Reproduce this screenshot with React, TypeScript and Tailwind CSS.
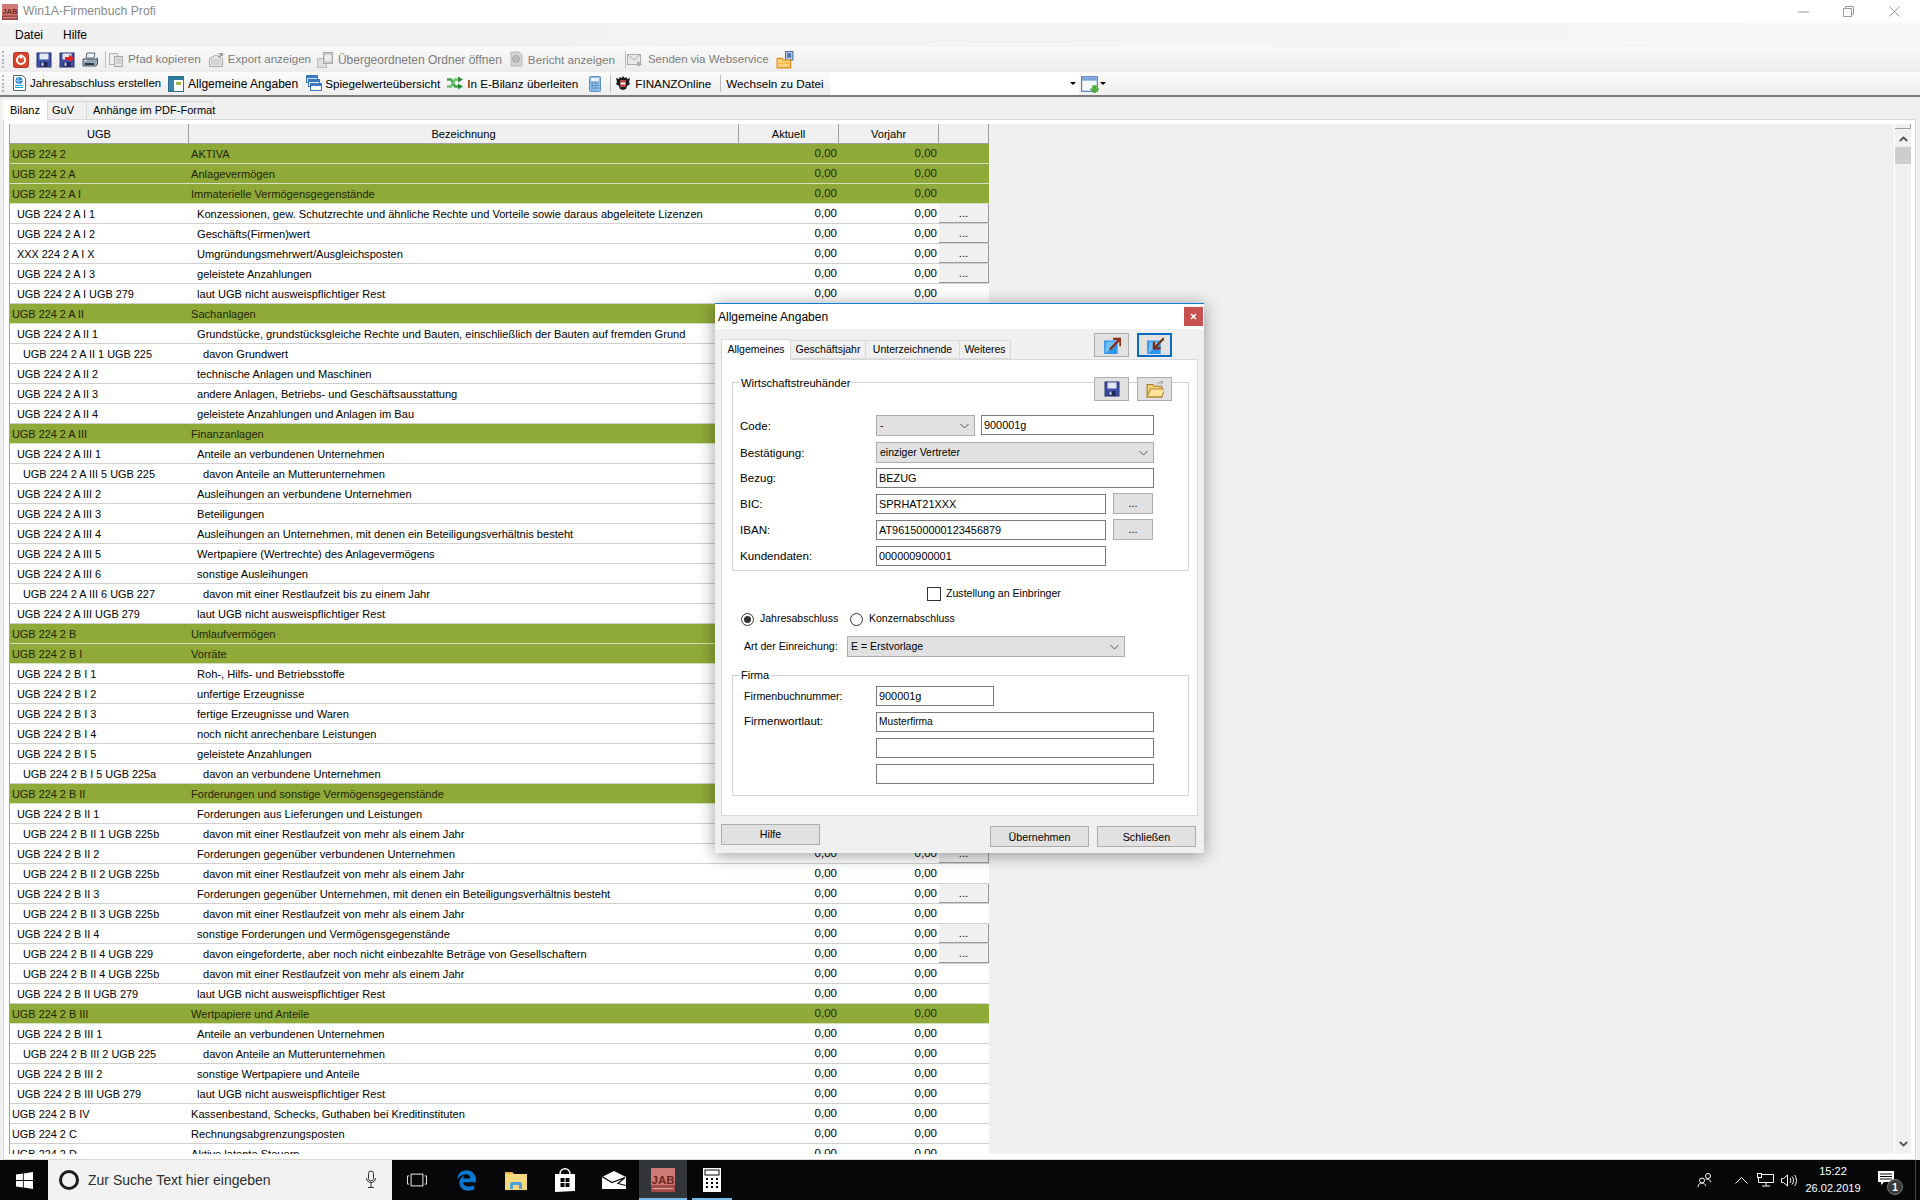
import React from "react";
import { FaEdgeLegacy } from "react-icons/fa6";

type R = [string, string, number, number?]; // ugb, bez, level (-1 = green), button
const rows: R[] = [
  ["UGB 224 2", "AKTIVA", -1],
  ["UGB 224 2 A", "Anlagevermögen", -1],
  ["UGB 224 2 A I", "Immaterielle Vermögensgegenstände", -1],
  ["UGB 224 2 A I 1", "Konzessionen, gew. Schutzrechte und ähnliche Rechte und Vorteile sowie daraus abgeleitete Lizenzen", 1, 1],
  ["UGB 224 2 A I 2", "Geschäfts(Firmen)wert", 1, 1],
  ["XXX 224 2 A I X", "Umgründungsmehrwert/Ausgleichsposten", 1, 1],
  ["UGB 224 2 A I 3", "geleistete Anzahlungen", 1, 1],
  ["UGB 224 2 A I UGB 279", "laut UGB nicht ausweispflichtiger Rest", 1],
  ["UGB 224 2 A II", "Sachanlagen", -1],
  ["UGB 224 2 A II 1", "Grundstücke, grundstücksgleiche Rechte und Bauten, einschließlich der Bauten auf fremden Grund", 1],
  ["UGB 224 2 A II 1 UGB 225", "davon Grundwert", 2],
  ["UGB 224 2 A II 2", "technische Anlagen und Maschinen", 1],
  ["UGB 224 2 A II 3", "andere Anlagen, Betriebs- und Geschäftsausstattung", 1],
  ["UGB 224 2 A II 4", "geleistete Anzahlungen und Anlagen im Bau", 1],
  ["UGB 224 2 A III", "Finanzanlagen", -1],
  ["UGB 224 2 A III 1", "Anteile an verbundenen Unternehmen", 1],
  ["UGB 224 2 A III 5 UGB 225", "davon Anteile an Mutterunternehmen", 2],
  ["UGB 224 2 A III 2", "Ausleihungen an verbundene Unternehmen", 1],
  ["UGB 224 2 A III 3", "Beteiligungen", 1],
  ["UGB 224 2 A III 4", "Ausleihungen an Unternehmen, mit denen ein Beteiligungsverhältnis besteht", 1],
  ["UGB 224 2 A III 5", "Wertpapiere (Wertrechte) des Anlagevermögens", 1],
  ["UGB 224 2 A III 6", "sonstige Ausleihungen", 1],
  ["UGB 224 2 A III 6 UGB 227", "davon mit einer Restlaufzeit bis zu einem Jahr", 2],
  ["UGB 224 2 A III UGB 279", "laut UGB nicht ausweispflichtiger Rest", 1],
  ["UGB 224 2 B", "Umlaufvermögen", -1],
  ["UGB 224 2 B I", "Vorräte", -1],
  ["UGB 224 2 B I 1", "Roh-, Hilfs- und Betriebsstoffe", 1],
  ["UGB 224 2 B I 2", "unfertige Erzeugnisse", 1],
  ["UGB 224 2 B I 3", "fertige Erzeugnisse und Waren", 1],
  ["UGB 224 2 B I 4", "noch nicht anrechenbare Leistungen", 1],
  ["UGB 224 2 B I 5", "geleistete Anzahlungen", 1],
  ["UGB 224 2 B I 5 UGB 225a", "davon an verbundene Unternehmen", 2],
  ["UGB 224 2 B II", "Forderungen und sonstige Vermögensgegenstände", -1],
  ["UGB 224 2 B II 1", "Forderungen aus Lieferungen und Leistungen", 1],
  ["UGB 224 2 B II 1 UGB 225b", "davon mit einer Restlaufzeit von mehr als einem Jahr", 2],
  ["UGB 224 2 B II 2", "Forderungen gegenüber verbundenen Unternehmen", 1, 1],
  ["UGB 224 2 B II 2 UGB 225b", "davon mit einer Restlaufzeit von mehr als einem Jahr", 2],
  ["UGB 224 2 B II 3", "Forderungen gegenüber Unternehmen, mit denen ein Beteiligungsverhältnis besteht", 1, 1],
  ["UGB 224 2 B II 3 UGB 225b", "davon mit einer Restlaufzeit von mehr als einem Jahr", 2],
  ["UGB 224 2 B II 4", "sonstige Forderungen und Vermögensgegenstände", 1, 1],
  ["UGB 224 2 B II 4 UGB 229", "davon eingeforderte, aber noch nicht einbezahlte Beträge von Gesellschaftern", 2, 1],
  ["UGB 224 2 B II 4 UGB 225b", "davon mit einer Restlaufzeit von mehr als einem Jahr", 2],
  ["UGB 224 2 B II UGB 279", "laut UGB nicht ausweispflichtiger Rest", 1],
  ["UGB 224 2 B III", "Wertpapiere und Anteile", -1],
  ["UGB 224 2 B III 1", "Anteile an verbundenen Unternehmen", 1],
  ["UGB 224 2 B III 2 UGB 225", "davon Anteile an Mutterunternehmen", 2],
  ["UGB 224 2 B III 2", "sonstige Wertpapiere und Anteile", 1],
  ["UGB 224 2 B III UGB 279", "laut UGB nicht ausweispflichtiger Rest", 1],
  ["UGB 224 2 B IV", "Kassenbestand, Schecks, Guthaben bei Kreditinstituten", 0],
  ["UGB 224 2 C", "Rechnungsabgrenzungsposten", 0],
  ["UGB 224 2 D", "Aktive latente Steuern", 0],
];

const S = ({ children, s = 16 }: { children: React.ReactNode; s?: number }) => (
  <svg width={s} height={s} viewBox="0 0 16 16" className="shrink-0">{children}</svg>
);

const PowerIcon = () => (
  <S>
    <rect x="0.500" y="0.500" width="15" height="15" rx="2" fill="#d8452a" stroke="#b5361e" />
    <circle cx="8" cy="8" r="4" fill="none" stroke="#fff" strokeWidth="2" />
    <rect x="7" y="2.500" width="2" height="4" fill="#fff" />
  </S>
);
const Floppy = ({ arrow }: { arrow?: boolean }) => (
  <S>
    <rect x="1" y="1" width="14" height="14" fill="#3c4fa8" stroke="#2b3470" />
    <rect x="3.500" y="1.500" width="9" height="6" fill="#e4e9f4" />
    <rect x="4.500" y="10" width="7" height="5" fill="#20265a" />
    <rect x="5.500" y="10.500" width="2" height="3.500" fill="#c8d0e8" />
    {arrow && <path d="M6 5h4V2.500L15.500 6.500 10 10.500V8H6z" fill="#e8241c" />}
  </S>
);
const PrinterIcon = () => (
  <S>
    <path d="M5 1h8l-1 5H4z" fill="#f2f2f2" stroke="#5a6a78" />
    <path d="M1 7h13l1.500-1V12l-1.500 2H1z" fill="#94a6b4" stroke="#4a5a68" />
    <rect x="3" y="11" width="9" height="2" fill="#2d3a44" />
    <rect x="2.500" y="8" width="2" height="1" fill="#ffffff" />
  </S>
);
const CopyIcon = () => (
  <S>
    <rect x="1.500" y="1.500" width="8" height="11" fill="#eee" stroke="#b4b4b4" />
    <rect x="6.500" y="4.500" width="8" height="10" fill="#e4e4e4" stroke="#a8a8a8" />
    <path d="M8 7h5M8 9h5M8 11h5" stroke="#b8b8b8" />
  </S>
);
const ExportIcon = () => (
  <S>
    <path d="M1.500 6.500 8 3l6.500 3.500v8h-13z" fill="#e8e8e8" stroke="#a8a8a8" />
    <path d="M3 8h10M3 10h10M3 12h10" stroke="#bdbdbd" />
    <path d="M9 1h6v4l-1.500-1.500L11 6 10 5l2.500-2.500z" fill="#9a9a9a" />
  </S>
);
const ParentIcon = () => (
  <S>
    <rect x="0.500" y="6.500" width="9" height="9" fill="#dedede" stroke="#bdbdbd" />
    <rect x="6.500" y="0.500" width="9" height="11" fill="#d0d0d0" stroke="#a6a6a6" />
    <rect x="8" y="3" width="6" height="6" fill="#efefef" />
  </S>
);
const ReportIcon = () => (
  <S>
    <path d="M3 1h8l3 3v11H3z" fill="#d4d4d4" stroke="#b8b8b8" />
    <circle cx="8" cy="8" r="3.500" fill="#bcbcbc" stroke="#a8a8a8" />
  </S>
);
const MailGray = () => (
  <S>
    <rect x="0.500" y="2.500" width="13" height="10" fill="#e8e8e8" stroke="#acacac" />
    <path d="M1 3l6 5 6-5" fill="none" stroke="#acacac" />
    <path d="M10 9l5 3-4 3z" fill="#a8a8a8" />
  </S>
);
const FolderWin = () => (
  <S s={18}>
    <rect x="8.500" y="0.500" width="6.500" height="7.500" fill="#c4d4ee" stroke="#4d70ac" />
    <rect x="10" y="2" width="3.500" height="4" fill="#4d70ac" />
    <path d="M1 6.500h4.500l1 1.500H13V15H1z" fill="#ffd27a" stroke="#e08a18" />
    <path d="M1.500 11h11" stroke="#f8b040" />
  </S>
);
const DocGlobe = () => (
  <S>
    <path d="M2.500 0.500h9l3 3v12h-12z" fill="#fff" stroke="#51657c" />
    <circle cx="8" cy="5.500" r="3.500" fill="#2c86da" />
    <path d="M5 5.500c2-1 3 1 6 0M8 2c-1.500 2-1.500 5 0 7" stroke="#bfe3ff" fill="none" strokeWidth=".8" />
    <path d="M4 10.500h8M4 12.500h8" stroke="#14a0c8" />
  </S>
);
const PanelIcon = () => (
  <S>
    <rect x="0.500" y="0.500" width="15" height="15" fill="#fff" stroke="#2c6e8e" />
    <rect x="1" y="1" width="14" height="3" fill="#2c7da0" />
    <rect x="1" y="4" width="5" height="11" fill="#3a86ad" />
    <rect x="8" y="6" width="5" height="3" fill="#98b848" />
  </S>
);
const StackIcon = () => (
  <S>
    <rect x="0.500" y="0.500" width="11" height="7" fill="#cfe3f8" stroke="#3a78c0" />
    <rect x="1" y="1" width="10" height="2" fill="#3a78c0" />
    <rect x="2.500" y="4.500" width="11" height="7" fill="#e4effb" stroke="#3a78c0" />
    <rect x="3" y="5" width="10" height="2" fill="#3a78c0" />
    <rect x="4.500" y="8.500" width="11" height="7" fill="#f7fbff" stroke="#3a78c0" />
    <rect x="5" y="9" width="10" height="2" fill="#3a78c0" />
  </S>
);
const ShuffleIcon = () => (
  <S>
    <path d="M0 4.500h4l4 7h3" fill="none" stroke="#3fa34a" strokeWidth="2.500" />
    <path d="M0 11.500h4l4-7h3" fill="none" stroke="#6cc070" strokeWidth="2.500" />
    <path d="M11 1.500l5 3-5 3zM11 8.500l5 3-5 3z" fill="#2d8b3a" />
  </S>
);
const CalcIcon = () => (
  <S>
    <rect x="2.500" y="0.500" width="11" height="15" rx="1" fill="#8fbde8" stroke="#5f8fc4" />
    <rect x="4" y="2" width="8" height="3" fill="#e6f2fc" />
    <path d="M4.500 7h2M7.500 7h2M10.500 7h1M4.500 9.500h2M7.500 9.500h2M10.500 9.500h1M4.500 12h2M7.500 12h2M10.500 12h1" stroke="#3a6ea8" />
  </S>
);
const EagleIcon = () => (
  <S>
    <path d="M8 1l1.500 2 2-1 .5 2 3-1-1 4 1 2-3 2-1 3-3 1-3-1-1-3-3-2 1-2-1-4 3 1 .5-2 2 1z" fill="#1c1c1c" />
    <rect x="5.500" y="5.500" width="5" height="6" fill="#fff" />
    <rect x="5.500" y="5.500" width="5" height="2" fill="#d12a2a" />
    <rect x="5.500" y="9.500" width="5" height="2" fill="#d12a2a" />
  </S>
);
const WinDown = () => (
  <S s={18}>
    <rect x="0.500" y="1.500" width="14" height="13" fill="#f4f8fd" stroke="#4d78b8" />
    <rect x="1" y="2" width="13" height="3" fill="#7aa2d8" />
    <path d="M10 9h4v3h2.500L12 17l-4.500-5H10z" fill="#4cae3c" />
  </S>
);
const Caret = () => <span className="inline-block border-x-[3px] border-t-[3px] border-x-transparent border-t-black" />;

const JabIcon = ({ s = 16 }: { s?: number }) => (
  <svg width={s} height={s} viewBox="0 0 24 24" className="shrink-0">
    <rect x="0" y="0" width="24" height="24" fill="#cf7a76" />
    <rect x="0" y="17" width="24" height="7" fill="#a24a48" />
    <rect x="1.500" y="20" width="21" height="1.200" fill="#e0a0a0" />
    <text x="12" y="15.500" textAnchor="middle" fontSize="11.500" fontWeight="700" fill="#6d2622" fontFamily="Liberation Sans">JAB</text>
  </svg>
);

const ArrowBox = ({ inward }: { inward?: boolean }) => (
  <S s={18}>
    <rect x="1" y="4" width="12" height="13" fill="#2f96ee" />
    <path d="M2 16l10-11H3z" fill="#76c0fa" />
    {inward
      ? <path d="M16 2 8 10M7 5v6h6" fill="none" stroke="#7a2c12" strokeWidth="2" />
      : <path d="M6 12 15 3M9 2.500h6.500V9" fill="none" stroke="#8a2f10" strokeWidth="2" />}
  </S>
);
const FolderOpen = () => (
  <S s={18}>
    <path d="M1 4h5l1.500 1.500H14V15H1z" fill="#f5cf72" stroke="#a67d2a" />
    <path d="M1 15l3-7h13l-3 7z" fill="#fde49a" stroke="#b08a34" />
    <path d="M10 4c1-2 3-2.500 5-2l-1.500-1M15 2l-1.500 1.500" fill="none" stroke="#8ca0b4" />
  </S>
);

const Chevron = () => (
  <svg width="9" height="6" viewBox="0 0 9 6" className="shrink-0"><path d="M.5 1l4 4 4-4" fill="none" stroke="#555" /></svg>
);

const TB = ({ icon, label, disabled, pad = 5, ml = 0, cls = "" }: { icon: React.ReactNode; label: string; disabled?: boolean; pad?: number; ml?: number; cls?: string }) => (
  <div className="flex items-center shrink-0" style={{ marginLeft: ml }}>
    {icon}
    <span className={`${disabled ? "text-[#7c7c7c]" : "text-black"} whitespace-nowrap ${cls}`} style={{ marginLeft: pad }}>{label}</span>
  </div>
);
const Grip = () => (
  <div className="w-[3px] h-[17px] ml-[2px] mr-[6px] shrink-0 flex flex-col justify-between">
    {[0, 1, 2, 3, 4].map((i) => <span key={i} className="block w-[2px] h-[2px] bg-[#b5b5b5]" />)}
  </div>
);
const Sep = ({ ml, mr }: { ml: number; mr: number }) => (
  <span className="w-px h-[17px] bg-[#bdbdbd] shrink-0" style={{ marginLeft: ml, marginRight: mr }} />
);

const Input = ({ v, w, cls = "text-[10.900px]" }: { v?: string; w: string; cls?: string }) => (
  <div className={`${w} h-5 border border-[#7a7a7a] bg-white flex items-center pl-[2px] text-black shrink-0 ${cls}`}>{v}</div>
);
const Combo = ({ v, cls }: { v: string; cls: string }) => (
  <div className={`${cls} h-[21px] border border-[#adadad] bg-[#e1e1e1] flex items-center justify-between pl-[3px] pr-[5px] text-[10.500px] shrink-0`}>
    <span>{v}</span><Chevron />
  </div>
);
const Btn = ({ children, cls }: { children: React.ReactNode; cls: string }) => (
  <div className={`${cls} border border-[#adadad] bg-[#e1e1e1] flex items-center justify-center text-[10.700px] shrink-0`}>{children}</div>
);
const FieldRow = ({ label, children, cls }: { label: string; children: React.ReactNode; cls: string }) => (
  <div className={`flex items-center ${cls}`}>
    <span className="w-[136px] shrink-0 text-[11.600px]">{label}</span>
    {children}
  </div>
);

const Dialog = () => (
  <div className="absolute left-[715px] top-[303px] w-[489px] h-[550px] bg-[#f0f0f0] border-t border-[#0f7fd6] shadow-[0_2px_16px_rgba(0,0,0,0.4)] flex flex-col text-black">
    <div className="h-[25px] bg-white flex items-center pl-[3px] shrink-0 relative">
      <span className="text-[12px]">Allgemeine Angaben</span>
      <div className="absolute right-[1px] top-[3px] w-[19px] h-[19px] bg-[#c75050] flex items-center justify-center">
        <svg width="7" height="7" viewBox="0 0 7 7"><path d="M1 1l5 5M6 1 1 6" stroke="#fff" strokeWidth="1.500" /></svg>
      </div>
    </div>
    <div className="flex flex-col pl-[6px] pr-[6px] flex-1">
      <div className="h-[30px] flex items-end shrink-0 relative z-10 text-[10.500px]">
        <div className="w-[70px] h-[21px] -mb-px bg-white border border-[#d9d9d9] border-b-0 flex items-center justify-center">Allgemeines</div>
        <div className="w-[75px] h-[19px] bg-[#f0f0f0] border border-[#d9d9d9] border-l-0 flex items-center justify-center">Geschäftsjahr</div>
        <div className="w-[94px] h-[19px] bg-[#f0f0f0] border border-[#d9d9d9] border-l-0 flex items-center justify-center">Unterzeichnende</div>
        <div className="w-[51px] h-[19px] bg-[#f0f0f0] border border-[#d9d9d9] border-l-0 flex items-center justify-center">Weiteres</div>
        <div className="ml-[83px] self-start mt-[4px] flex gap-2">
          <Btn cls="w-[35px] h-6"><ArrowBox /></Btn>
          <Btn cls="w-[35px] h-6 !border-2 !border-[#0a6cc4]"><ArrowBox inward /></Btn>
        </div>
      </div>
      <div className="w-[477px] h-[457px] bg-white border border-[#d9d9d9] pl-[10px] shrink-0">
        <div className="relative w-[457px] h-[189px] mt-[22px] border border-[#d4d4d4] pl-[7px] pt-[32px]">
          <span className="absolute left-[6px] -top-[7px] bg-white px-[2px] text-[11.200px] leading-[14px]">Wirtschaftstreuhänder</span>
          <div className="absolute right-4 -top-[6px] flex gap-2">
            <Btn cls="w-[35px] h-6"><Floppy /></Btn>
            <Btn cls="w-[35px] h-6"><FolderOpen /></Btn>
          </div>
          <FieldRow label="Code:" cls="h-[21px]">
            <Combo v="-" cls="w-[99px]" />
            <div className="ml-[6px] self-start"><Input v="900001g" w="w-[173px]" /></div>
          </FieldRow>
          <FieldRow label="Bestätigung:" cls="h-[21px] mt-[6px]"><Combo v="einziger Vertreter" cls="w-[278px]" /></FieldRow>
          <FieldRow label="Bezug:" cls="h-5 mt-[5px]"><Input v="BEZUG" w="w-[278px]" /></FieldRow>
          <FieldRow label="BIC:" cls="h-5 mt-[6px]">
            <Input v="SPRHAT21XXX" w="w-[230px]" />
            <Btn cls="w-10 h-[21px] ml-[7px] -mt-[1px]">...</Btn>
          </FieldRow>
          <FieldRow label="IBAN:" cls="h-5 mt-[6px]">
            <Input v="AT961500000123456879" w="w-[230px]" />
            <Btn cls="w-10 h-[21px] ml-[7px] -mt-[1px]">...</Btn>
          </FieldRow>
          <FieldRow label="Kundendaten:" cls="h-5 mt-[6px]"><Input v="000000900001" w="w-[230px]" /></FieldRow>
        </div>
        <div className="flex items-center h-[14px] mt-4 pl-[195px] text-[10.600px]">
          <span className="w-[14px] h-[14px] border border-[#333] bg-white shrink-0" />
          <span className="ml-[5px]">Zustellung an Einbringer</span>
        </div>
        <div className="flex items-center h-[14px] mt-[11px] pl-[9px] text-[10.500px]">
          <span className="w-[13px] h-[13px] rounded-full border border-[#333] bg-white flex items-center justify-center shrink-0">
            <span className="w-[7px] h-[7px] rounded-full bg-[#333]" />
          </span>
          <span className="ml-[6px] w-[90px]">Jahresabschluss</span>
          <span className="w-[13px] h-[13px] rounded-full border border-[#333] bg-white shrink-0" />
          <span className="ml-[6px]">Konzernabschluss</span>
        </div>
        <div className="flex items-center h-[21px] mt-[10px] pl-3 text-[10.600px]">
          <span className="w-[103px] shrink-0">Art der Einreichung:</span>
          <Combo v="E = Erstvorlage" cls="w-[278px]" />
        </div>
        <div className="relative w-[457px] h-[121px] mt-[18px] border border-[#d4d4d4] pl-[11px] pt-[10px]">
          <span className="absolute left-[6px] -top-[8px] bg-white px-[2px] text-[11px] leading-[14px]">Firma</span>
          <div className="flex items-center h-5">
            <span className="w-[132px] shrink-0 text-[10.700px]">Firmenbuchnummer:</span>
            <Input v="900001g" w="w-[118px]" />
          </div>
          <div className="flex items-center h-5 mt-[6px]">
            <span className="w-[132px] shrink-0 text-[11.500px]">Firmenwortlaut:</span>
            <Input v="Musterfirma" w="w-[278px]" cls="text-[10.200px]" />
          </div>
          <div className="h-5 mt-[6px] pl-[132px]"><Input w="w-[278px]" /></div>
          <div className="h-5 mt-[6px] pl-[132px]"><Input w="w-[278px]" /></div>
        </div>
      </div>
      <div className="flex items-start mt-2">
        <Btn cls="w-[99px] h-[21px]">Hilfe</Btn>
        <Btn cls="w-[99px] h-[21px] mt-[2px] ml-[170px] pt-px">Übernehmen</Btn>
        <Btn cls="w-[99px] h-[21px] mt-[2px] ml-2 pt-px">Schließen</Btn>
      </div>
    </div>
  </div>
);

const Row = ({ r }: { r: R }) => {
  const [u, b, lvl, btn] = r;
  const green = lvl < 0;
  const ind = lvl > 0 ? lvl * 6 : 0;
  return (
    <div className={`flex h-5 border-b ${green ? "bg-[#8faa38] border-[#d7dfbf] text-[#1f2608]" : "bg-white border-[#cfcfcf] text-black"}`}>
      <div className="w-[179px] shrink-0 overflow-hidden whitespace-nowrap leading-[20px] text-[10.900px]" style={{ paddingLeft: (lvl > 0 ? 1 : 2) + ind }}>{u}</div>
      <div className="w-[550px] shrink-0 overflow-hidden whitespace-nowrap leading-[20px] text-[11.100px]" style={{ paddingLeft: 2 + ind }}>{b}</div>
      <div className="w-[100px] shrink-0 text-right pr-[2px] leading-[19px]">0,00</div>
      <div className="w-[100px] shrink-0 text-right pr-[2px] leading-[19px]">0,00</div>
      <div className="w-[50px] shrink-0">
        {btn ? <div className="h-[19px] bg-[#f0f0f0] border-r border-b border-[#9a9a9a] flex items-center justify-center leading-[19px]">...</div> : null}
      </div>
    </div>
  );
};

const H = ({ cls, t }: { cls: string; t?: string }) => (
  <div className={`${cls} shrink-0 h-5 pt-px border-r border-[#a0a0a0] flex items-center justify-center text-[11.100px]`}>{t}</div>
);

const WinBtns = () => (
  <div className="ml-auto flex items-center text-[#9a9a9a]">
    <svg width="11" height="2" viewBox="0 0 11 2" className="mr-[34px]"><path d="M0 1h11" stroke="#9a9a9a" /></svg>
    <svg width="11" height="11" viewBox="0 0 11 11" className="mr-[35px]"><path d="M.5 2.500h8v8h-8zM2.500 2.500v-2h8v8h-2" fill="none" stroke="#9a9a9a" /></svg>
    <svg width="11" height="11" viewBox="0 0 11 11" className="mr-[20px]"><path d="M.5.500l10 10M10.500.500l-10 10" stroke="#9a9a9a" /></svg>
  </div>
);

const Taskbar = () => (
  <div className="h-10 bg-[#050709] flex items-center shrink-0 text-white">
    <div className="w-12 h-10 flex items-center justify-center shrink-0">
      <svg width="17" height="17" viewBox="0 0 16 16"><path d="M0 2.300 6.500 1.400v6.200H0zM7.300 1.300 16 0v7.600H7.300zM0 8.400h6.500v6.200L0 13.700zM7.300 8.400H16V16l-8.700-1.300z" fill="#fff" /></svg>
    </div>
    <div className="w-[344px] h-10 bg-[#f2f2f2] flex items-center shrink-0 relative">
      <span className="ml-[11px] w-5 h-5 rounded-full border-[3px] border-[#1c1c1c] shrink-0" />
      <span className="ml-[9px] text-[14px] text-[#2e2e2e]">Zur Suche Text hier eingeben</span>
      <svg width="12" height="20" viewBox="0 0 12 20" className="ml-auto mr-[15px]"><rect x="3.500" y="1" width="5" height="10" rx="2.500" fill="none" stroke="#333" /><path d="M1.500 8c0 6 9 6 9 0M6 13v4M3 17.500h6" fill="none" stroke="#333" /></svg>
    </div>
    <div className="w-[50px] h-10 flex items-center justify-center shrink-0">
      <svg width="20" height="14" viewBox="0 0 22 14"><rect x="4.500" y=".5" width="13" height="13" fill="none" stroke="#fff" /><path d="M2.500 2.500H.5v9h2M19.500 2.500h2v9h-2" fill="none" stroke="#fff" /></svg>
    </div>
    <div className="w-[49px] h-10 flex items-center justify-center shrink-0"><FaEdgeLegacy className="text-[#0a78d0]" size={21} /></div>
    <div className="w-[49px] h-10 flex items-center justify-center shrink-0">
      <svg width="22" height="20" viewBox="0 0 22 20"><path d="M0 2h7l2 2h13v16H0z" fill="#f7d77f" /><path d="M0 2h7l2 2H0z" fill="#e8b94b" /><path d="M5 19v-5c0-1 1-2 2-2h8c1 0 2 1 2 2v5h-3v-4H8v4z" fill="#4a9fdc" /></svg>
    </div>
    <div className="w-[49px] h-10 flex items-center justify-center shrink-0">
      <svg width="22" height="26" viewBox="0 0 22 26"><path d="M1 7h20v17l-20 1z" fill="#fff" /><path d="M6 7c0-7 10-7 10 0" fill="none" stroke="#fff" strokeWidth="1.500" /><path d="M6.500 11h4v4h-4zM11.500 11h4v4h-4zM6.500 16h4v4h-4zM11.500 16h4v4h-4z" fill="#050709" /></svg>
    </div>
    <div className="w-[49px] h-10 flex items-center justify-center shrink-0">
      <svg width="24" height="18" viewBox="0 0 24 18"><path d="M0 6 12 0l12 6v12H0z" fill="#fff" /><path d="M0 5.500 10 11.500 23 6.500l-7 6 8 2" fill="none" stroke="#050709" strokeWidth="1.200" /></svg>
    </div>
    <div className="w-12 h-10 ml-[1px] bg-[#32363a] flex items-center justify-center shrink-0 relative">
      <JabIcon s={24} />
      <span className="absolute left-0 right-0 bottom-0 h-[2px] bg-[#76b9ed]" />
    </div>
    <div className="w-12 h-10 ml-[1px] flex items-center justify-center shrink-0 relative">
      <svg width="18" height="24" viewBox="0 0 18 24"><rect width="18" height="24" fill="#fff" /><rect x="2" y="2" width="14" height="5" fill="#fff" stroke="#050709" /><path d="M3 10h2v2H3zM8 10h2v2H8zM13 10h2v2h-2zM3 14h2v2H3zM8 14h2v2H8zM13 14h2v2h-2zM3 18h2v2H3zM8 18h2v2H8zM13 18h2v2h-2z" fill="#050709" /></svg>
      <span className="absolute left-1 right-1 bottom-0 h-[2px] bg-[#76b9ed]" />
    </div>
    <div className="ml-auto flex items-center h-10">
      <div className="w-9 mr-[6px] flex justify-center">
        <svg width="16" height="16" viewBox="0 0 16 16"><circle cx="5" cy="8.500" r="2.500" fill="none" stroke="#fff" /><circle cx="11" cy="4" r="2.500" fill="none" stroke="#fff" /><path d="M1 15c0-3 2-4 4-4s3 1 4 3M8.500 7.500c1-.8 4-.8 5.500 2.500" fill="none" stroke="#fff" /></svg>
      </div>
      <div className="w-6 flex justify-center">
        <svg width="13" height="8" viewBox="0 0 13 8"><path d="M.5 7.500l6-6 6 6" fill="none" stroke="#fff" /></svg>
      </div>
      <div className="w-6 flex justify-center">
        <svg width="17" height="14" viewBox="0 0 17 14"><path d="M4.500 1.500h12v8H1.500V5M9 9.500v3M5 13h8" fill="none" stroke="#fff" /><rect x="0.500" y="0.500" width="4" height="4" fill="none" stroke="#fff" /></svg>
      </div>
      <div className="w-6 flex justify-center">
        <svg width="16" height="13" viewBox="0 0 16 13"><path d="M.5 4.500h2l4-3.500v11l-4-3.500h-2zM9 4c1 1 1 4 0 5M11 2.500c2 2 2 6 0 8M13.500 1c2.500 3 2.500 8 0 11" fill="none" stroke="#fff" /></svg>
      </div>
      <div className="w-16 flex flex-col items-center text-[11px] leading-[17px] text-white">
        <span>15:22</span>
        <span>26.02.2019</span>
      </div>
      <div className="w-11 h-10 relative flex justify-center items-center">
        <svg width="16" height="15" viewBox="0 0 16 15" className="-ml-[3px] -mt-[4px]"><path d="M0 0h16v11H6l-3 3v-3H0z" fill="#fff" /><path d="M2 3h12M2 5.500h12M2 8h12" stroke="#050709" /></svg>
        <span className="absolute left-[22px] top-[19px] w-4 h-4 rounded-full bg-[#3a3a3a] border border-[#777] flex items-center justify-center text-[10px] font-bold">1</span>
      </div>
      <span className="ml-[6px] w-px h-10 bg-[#444] mr-[4px]" />
    </div>
  </div>
);

export default function App() {
  return (
    <div className="relative w-[1920px] h-[1200px] overflow-hidden flex flex-col bg-[#f0f0f0] font-['Liberation_Sans',sans-serif] text-[11.500px] text-black">
      <div className="h-[23px] bg-white flex items-center pl-[2px] shrink-0">
        <JabIcon />
        <span className="ml-[5px] text-[12.200px] text-[#8a8a8a]">Win1A-Firmenbuch Profi</span>
        <WinBtns />
      </div>
      <div className="h-6 bg-gradient-to-r from-[#f0f0f0] to-[#f7f7f7] flex items-center pl-[15px] gap-5 text-[12px] shrink-0">
        <span>Datei</span><span>Hilfe</span>
      </div>
      <div className="h-[25px] bg-gradient-to-b from-[#fafafa] to-[#ececec] flex items-center text-[11.600px] shrink-0">
        <Grip />
        <div className="ml-[2px]"><PowerIcon /></div>
        <div className="ml-[7px]"><Floppy /></div>
        <div className="ml-[7px]"><Floppy arrow /></div>
        <div className="ml-[7px]"><PrinterIcon /></div>
        <Sep ml={7} mr={2} />
        <TB icon={<CopyIcon />} label="Pfad kopieren" disabled pad={4} cls="text-[11.800px]" />
        <TB icon={<ExportIcon />} label="Export anzeigen" disabled ml={7} pad={4} cls="text-[11.500px]" />
        <TB icon={<ParentIcon />} label="Übergeordneten Ordner öffnen" disabled ml={6} cls="text-[12px]" />
        <TB icon={<ReportIcon />} label="Bericht anzeigen" disabled ml={6} pad={4} cls="text-[11.700px]" />
        <Sep ml={10} mr={1} />
        <TB icon={<MailGray />} label="Senden via Webservice" disabled cls="text-[11.500px]" />
        <div className="ml-[7px]"><FolderWin /></div>
      </div>
      <div className="h-[25px] bg-gradient-to-b from-[#fbfbfb] to-[#eeeeee] flex items-center text-[11.700px] border-b-2 border-[#7d7d7d] shrink-0">
        <Grip />
        <TB icon={<DocGlobe />} label="Jahresabschluss erstellen" pad={3} cls="text-[11.400px]" />
        <TB icon={<PanelIcon />} label="Allgemeine Angaben" ml={7} pad={4} cls="text-[12px]" />
        <TB icon={<StackIcon />} label="Spiegelwerteübersicht" ml={8} pad={3} />
        <TB icon={<ShuffleIcon />} label="In E-Bilanz überleiten" ml={7} pad={4} />
        <div className="ml-[9px]"><CalcIcon /></div>
        <Sep ml={7} mr={4} />
        <TB icon={<EagleIcon />} label="FINANZOnline" pad={4} />
        <Sep ml={9} mr={5} />
        <span className="whitespace-nowrap">Wechseln zu Datei</span>
        <div className="ml-[6px] w-[249px] h-[23px] bg-white flex items-center justify-end pr-[3px] shrink-0"><Caret /></div>
        <div className="ml-[2px]"><WinDown /></div>
        <div className="ml-[1px] flex items-center"><Caret /></div>
      </div>
      <div className="flex-1 min-h-0 flex flex-col pl-[3px] pr-[4px] pt-[3px]">
        <div className="h-[19px] flex items-end shrink-0 relative z-10 text-[11px]">
          <div className="w-11 h-[20px] -mb-px bg-white pl-[7px] flex items-center">Bilanz</div>
          <div className="w-10 h-[18px] border border-[#d9d9d9] border-b-0 pl-[4px] flex items-center">GuV</div>
          <div className="w-[125px] h-[18px] border border-[#d9d9d9] border-b-0 border-l-0 pl-[6px] flex items-center whitespace-nowrap">Anhänge im PDF-Format</div>
        </div>
        <div className="flex-1 min-h-0 bg-white border border-[#d9d9d9] pl-[5px] pr-1 pt-1 pb-[5px] flex">
          <div className="flex-1 min-w-0 bg-[#f0f0f0] overflow-hidden">
            <div className="w-[980px] border-l border-[#a0a0a0]">
              <div className="flex border-b border-[#a0a0a0] h-5 bg-[#f0f0f0]">
                <H cls="w-[179px]" t="UGB" />
                <H cls="w-[550px]" t="Bezeichnung" />
                <H cls="w-[100px]" t="Aktuell" />
                <H cls="w-[100px]" t="Vorjahr" />
                <H cls="w-[50px]" />
              </div>
              {rows.map((r, i) => <Row key={i} r={r} />)}
            </div>
          </div>
          <div className="w-4 ml-px bg-[#f0f0f0] flex flex-col items-center shrink-0 relative">
            <span className="w-full h-[5px] border-b border-r border-[#a0a0a0]" />
            <svg width="9" height="6" viewBox="0 0 9 6" className="mt-[7px]"><path d="M.8 5 4.500 1.500 8.200 5" fill="none" stroke="#555" strokeWidth="1.800" /></svg>
            <span className="w-full h-[17px] bg-[#cdcdcd] mt-[5px]" />
            <svg width="9" height="6" viewBox="0 0 9 6" className="mt-auto mb-[7px]"><path d="M.8 1 4.500 4.500 8.200 1" fill="none" stroke="#555" strokeWidth="1.800" /></svg>
          </div>
        </div>
      </div>
      <Taskbar />
      <Dialog />
    </div>
  );
}
